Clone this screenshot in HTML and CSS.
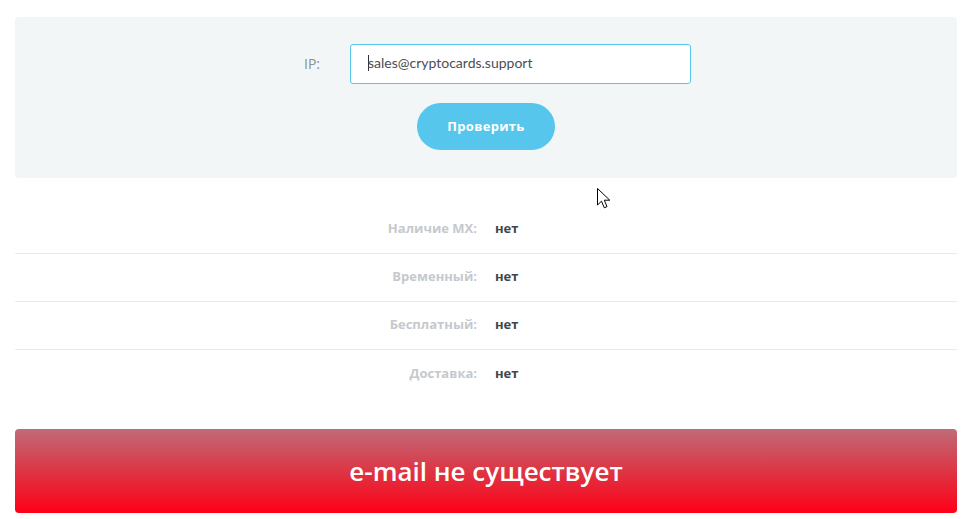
FILE: index.html
```html
<!DOCTYPE html>
<html lang="ru">
<head>
<meta charset="utf-8">
<title>Проверка e-mail</title>
<link rel="stylesheet" href="styles.css">
</head>
<body>
<div class="page">
  <section class="panel">
    <div class="form-row">
      <label class="ip-label" for="ip">IP:</label>
      <div class="input"><span class="caret"></span>sales@cryptocards.support</div>
    </div>
    <div class="btn-row">
      <button class="btn">Проверить</button>
    </div>
  </section>

  <ul class="results">
    <li class="row"><span class="key">Наличие MX:</span><span class="val">нет</span></li>
    <li class="row"><span class="key">Временный:</span><span class="val">нет</span></li>
    <li class="row"><span class="key">Бесплатный:</span><span class="val">нет</span></li>
    <li class="row"><span class="key">Доставка:</span><span class="val">нет</span></li>
  </ul>

  <div class="banner">e-mail не существует</div>

  <svg class="cursor" width="14" height="23" viewBox="0 0 14 23">
    <path d="M0.5 0.5 L0.5 17 L4.5 13.2 L7.3 19.8 L10 18.6 L7.3 12.2 L12.8 12.2 Z" fill="#fff" stroke="#000" stroke-width="1" stroke-linejoin="miter"/>
  </svg>
</div>
</body>
</html>
```

FILE: styles.css
```css
* { box-sizing: border-box; }
html, body { margin: 0; padding: 0; background: #fff; }
body { font-family: "Open Sans", "Liberation Sans", sans-serif; }

.page {
  position: relative;
  padding: 17px 9px 6px 15px;
}

.panel {
  background: #f2f6f7;
  border-radius: 4px;
  padding: 27px 0 28px;
}

.form-row {
  display: grid;
  grid-template-columns: 305px 341px;
  column-gap: 30px;
  align-items: center;
}
.ip-label {
  text-align: right;
  font-size: 14px;
  color: #8a8f93;
  padding-bottom: 2px;
}
.input {
  height: 40px;
  border: 1px solid #5bc6ec;
  border-radius: 3px;
  background: #fff;
  display: flex;
  align-items: center;
  padding-left: 17px;
  padding-bottom: 3px;
  font-family: Lato, "Open Sans", sans-serif;
  font-size: 14px;
  color: #4a4f55;
}
.caret {
  display: inline-block;
  width: 1px;
  height: 16px;
  background: #333;
  margin-right: -1px;
}

.btn-row {
  display: flex;
  justify-content: center;
  margin-top: 19px;
}
.btn {
  width: 138px;
  height: 47px;
  border: none;
  border-radius: 24px;
  background: #56c6ed;
  color: #fff;
  font-family: "Open Sans", sans-serif;
  font-weight: 700;
  font-size: 13px;
  letter-spacing: 0.3px;
  padding-bottom: 2px;
}

.results {
  list-style: none;
  margin: 28px 0 0;
  padding: 0;
}
.row {
  display: grid;
  grid-template-columns: 1fr 1fr;
  column-gap: 18px;
  align-items: center;
  height: 48px;
  padding-bottom: 3px;
  border-bottom: 1px solid #e9ecee;
  font-size: 13px;
  font-weight: 700;
}
.row:last-child { border-bottom: none; }
.key { text-align: right; color: #c5c9cd; }
.val { color: #43474c; }

.banner {
  margin-top: 31px;
  height: 84px;
  border-radius: 4px;
  background: linear-gradient(to bottom, #c06b78 0%, #e0303f 55%, #ff0018 100%);
  color: #fff;
  display: flex;
  align-items: center;
  justify-content: center;
  font-size: 26px;
  font-weight: 600;
}

.cursor {
  position: absolute;
  left: 597px;
  top: 188px;
}
```
